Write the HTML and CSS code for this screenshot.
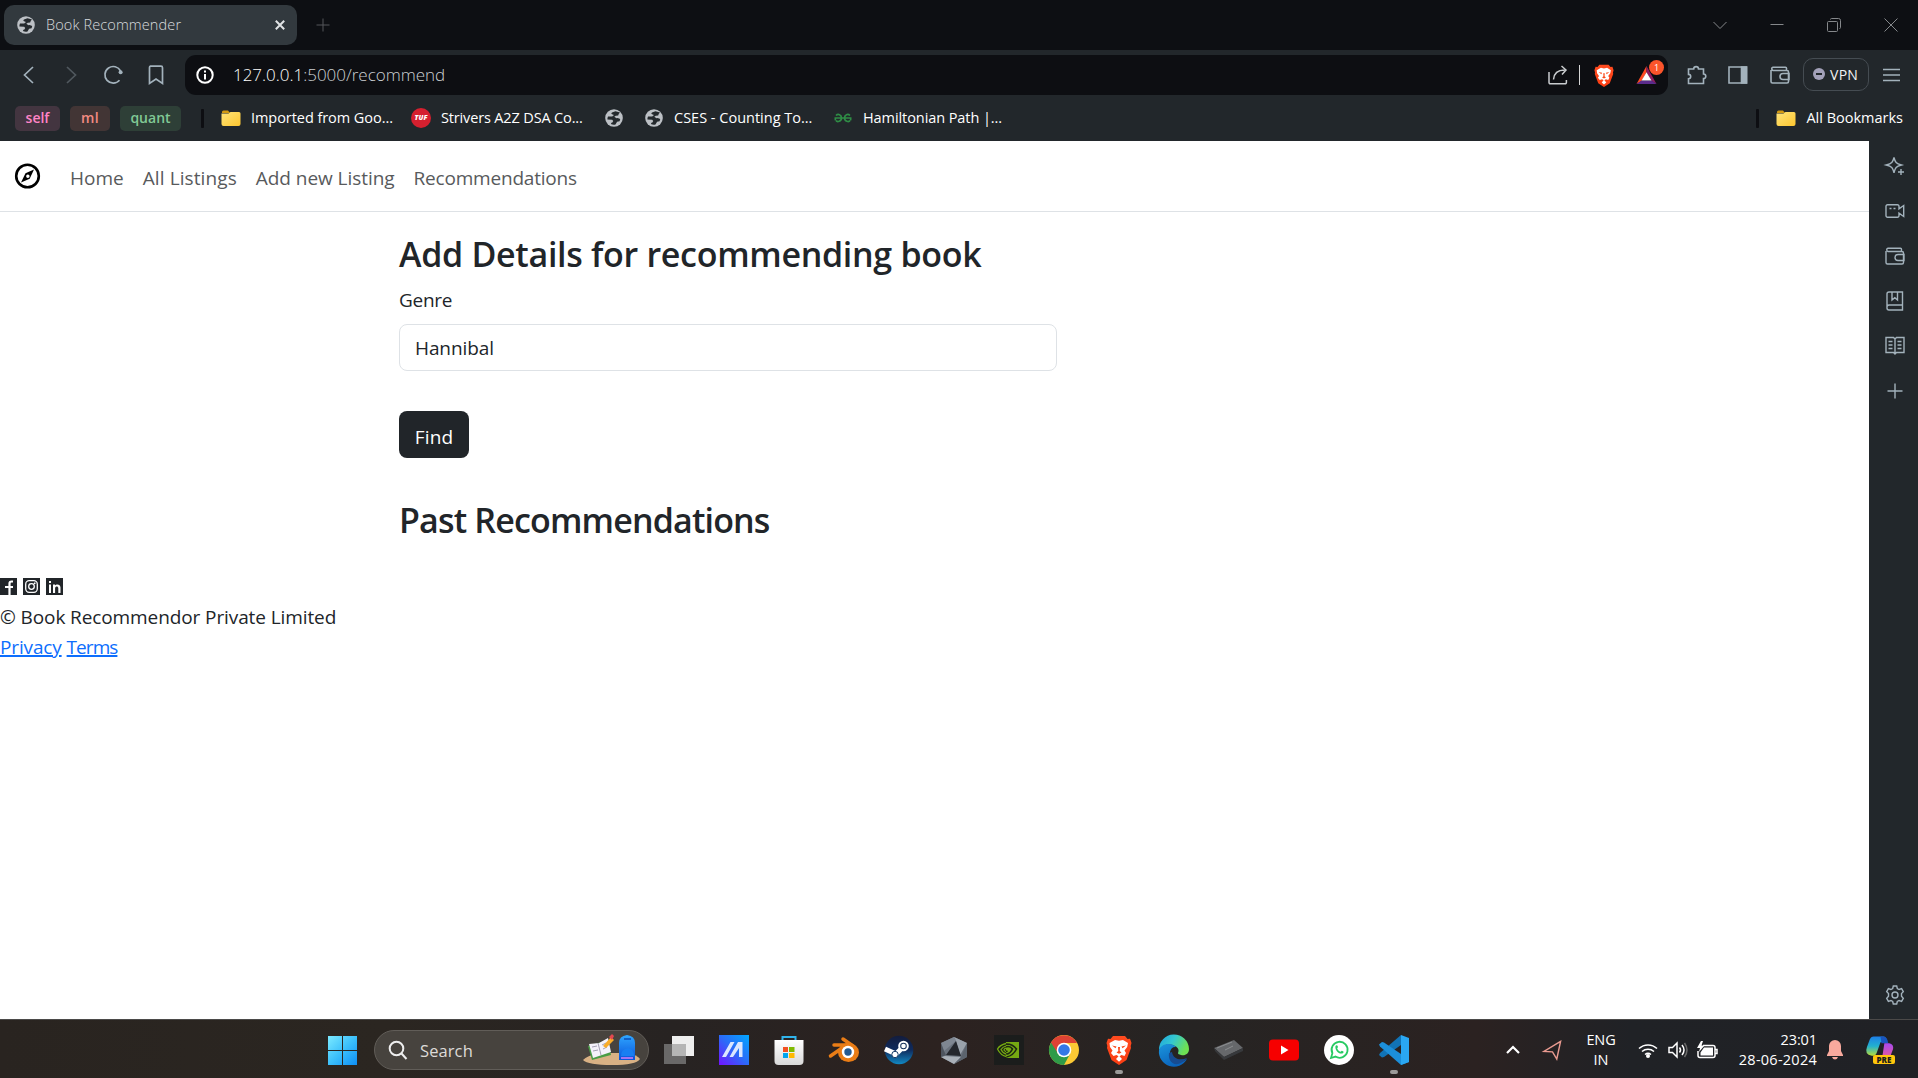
FILE: index.html
```html
<!DOCTYPE html>
<html lang="en">
<head>
<meta charset="utf-8">
<title>Book Recommender</title>
<link rel="stylesheet" href="styles.css">
</head>
<body>
<svg class="defs" aria-hidden="true">
  <defs>
    <symbol id="globe" viewBox="0 0 18 18"><circle cx="9" cy="9" r="8.8" fill="#bcc0c5"/><path d="M10.5 2.2 7 3.500q-1.500 1 0 1.800L9 6 7.200 7.600 3 7.400a7 7 0 0 0-.6 3.200l4.800.2 1 1.200-.8 1.500-1.400.4.300 1.300a7 7 0 0 0 4.200.2l1.600-2.600 2.500-.6.6-2.200-2.500-1-1.200.3-2.200-1.500 1.400-1 2.500-.3.6-1.800 1.200-1.200z" fill="#24292d"/></symbol>
    <symbol id="folder" viewBox="0 0 20 17"><path d="M1 2a1.500 1.500 0 0 1 1.500-1.500H7l2 2.500h-8z" fill="#d39a12"/><path d="M1 3.500h6.500L9.500 2H18a1.500 1.500 0 0 1 1.500 1.500V14A2 2 0 0 1 17.500 16h-15A2 2 0 0 1 .5 14V3.500z" fill="url(#gFolder)"/></symbol>
    <symbol id="lion" viewBox="0 0 26 30"><path d="M7 1h12l2.500 3 2.500-.3L25.500 8l-.8 3 .3 2-4.500 12L13 30 5.500 25 1 13l.3-2L.5 8 2 3.700l2.500.3z" fill="url(#gBrave)"/><path d="M9 5l4 .8L17 5l5 3-.8 4-2.700 3.500L20 18l-1.500 3-3-1-2 1.300 2.500 2.700-3 2.700-3-2.700 2.500-2.700-2-1.300-3 1L5 18l1.500-2.500L4 12 3.500 8z" fill="#fff"/><path d="M6 10.500l4.500 1-1 1.800zM20 10.500l-4.500 1 1 1.800zM12 12h2l-.3 4 1.800 1.500-2.500 1.300-2.500-1.300 1.800-1.500z" fill="#fb4a1a"/></symbol>
    <symbol id="wallet" viewBox="0 0 20 18"><path d="M1 4v11.500a1.500 1.500 0 0 0 1.500 1.500H17a1.500 1.500 0 0 0 1.500-1.500V6A1.500 1.500 0 0 0 17 4.500H3A1.700 1.700 0 0 1 3 1.200h12.500a1 1 0 0 1 1 1v2M19 7.500h-6a3 3 0 0 0 0 6h6z"/></symbol>
    <linearGradient id="gFolder" x2="1" y2="1"><stop stop-color="#ffe47a"/><stop offset="1" stop-color="#fdc62f"/></linearGradient>
    <linearGradient id="gBrave" x2="0" y2="1"><stop stop-color="#ff4b1f"/><stop offset="1" stop-color="#fb3d12"/></linearGradient>
    <linearGradient id="gWin" x2="1" y2="1"><stop stop-color="#7ceaff"/><stop offset=".5" stop-color="#3cc0fb"/><stop offset="1" stop-color="#0e8ff6"/></linearGradient>
    <linearGradient id="gAsus" x1="0" y1="1" x2="1" y2="0"><stop stop-color="#7312ff"/><stop offset=".5" stop-color="#2b6bf8"/><stop offset="1" stop-color="#00a8ff"/></linearGradient>
    <linearGradient id="gSteam" x2="0" y2="1"><stop stop-color="#131c3c"/><stop offset=".5" stop-color="#0f2b5d"/><stop offset="1" stop-color="#1189c4"/></linearGradient>
    <linearGradient id="gEdge" x1="0" y1="0" x2="1" y2=".4"><stop stop-color="#1ea4e0"/><stop offset=".5" stop-color="#34c7cf"/><stop offset="1" stop-color="#6ee053"/></linearGradient>
    <linearGradient id="gEdge2" x2=".5" y2="1"><stop stop-color="#1b95dd"/><stop offset="1" stop-color="#0a63bb"/></linearGradient>
    <linearGradient id="gBag" x2="0" y2="1"><stop stop-color="#2fa6ff"/><stop offset="1" stop-color="#0a55dc"/></linearGradient>
    <linearGradient id="gStore" x2="0" y2="1"><stop stop-color="#fff"/><stop offset="1" stop-color="#d9d9d9"/></linearGradient>
    <linearGradient id="gCop" x2="0" y2="1"><stop stop-color="#1d7fe8"/><stop offset=".5" stop-color="#22b0cf"/><stop offset="1" stop-color="#b9dd37"/></linearGradient>
    <linearGradient id="gCop2" x2="0" y2="1"><stop stop-color="#a64af0"/><stop offset="1" stop-color="#f0598f"/></linearGradient>
  </defs>
</svg>

<div class="desktop">
  <header class="tabstrip">
    <div class="tab">
      <svg class="globe-icon"><use href="#globe"/></svg>
      <span class="tab-title">Book Recommender</span>
      <svg class="tab-close" viewBox="0 0 10 10"><path d="M.8.8l8.400 8.400M9.200.8L.8 9.200"/></svg>
    </div>
    <svg class="new-tab" viewBox="0 0 14 14"><path d="M7 .5v13M.5 7h13"/></svg>
    <div class="window-controls">
      <svg viewBox="0 0 14 14"><path d="M.5 4l6.500 6.500L13.500 4"/></svg>
      <svg viewBox="0 0 14 14"><path d="M.5 6.500h13"/></svg>
      <svg viewBox="0 0 14 14"><path d="M.5 4.500a1 1 0 0 1 1-1h8a1 1 0 0 1 1 1v8a1 1 0 0 1-1 1h-8a1 1 0 0 1-1-1zM3.500 1.500a1 1 0 0 1 1-1h7a2 2 0 0 1 2 2v7a1 1 0 0 1-1 1"/></svg>
      <svg viewBox="0 0 14 14"><path d="M.5.5l13 13M13.500.5l-13 13"/></svg>
    </div>
  </header>

  <div class="toolbar">
    <nav class="history">
      <svg viewBox="0 0 20 20"><path d="M14 2L5.500 10l8.500 8"/></svg>
      <svg class="dim" viewBox="0 0 20 20"><path d="M6 2l8.500 8L6 18"/></svg>
      <svg viewBox="0 0 20 20"><path d="M16.500 15.300A8.300 8.300 0 1 1 17.600 6"/><circle cx="17.600" cy="7.300" r="2" fill="#a3b2bc" stroke="none"/></svg>
      <svg class="save" viewBox="0 0 20 20"><path d="M4.500 1.200h10.500a1.500 1.500 0 0 1 1.500 1.500V18.500L10 14l-6.500 4.500V2.500A1.300 1.300 0 0 1 4.500 1.200z"/></svg>
    </nav>
    <div class="address">
      <svg class="info" viewBox="0 0 18 18"><circle cx="9" cy="9" r="7.700" fill="none" stroke="#fff" stroke-width="2"/><path d="M8 4.500h2v2H8zM8 8h2v5.500H8z" fill="#fff"/></svg>
      <span class="url"><b>127.0.0.1</b>:5000/recommend</span>
      <div class="address-actions">
        <svg class="share" viewBox="0 0 20 20"><path d="M1 7v10.500a1.200 1.200 0 0 0 1.200 1.200h15a1.200 1.200 0 0 0 1.200-1.200V15M5.500 14.500c.5-6 4-9.500 11-9.500M13.500 1l4.500 4-4 4.500"/></svg>
        <span class="sep"></span>
        <svg class="shield"><use href="#lion"/></svg>
        <span class="rewards">
          <svg viewBox="0 0 24 22"><path d="M12 1L1 21l5.500-3.500L12 8z" fill="#ff4b22"/><path d="M12 1v7l5.500 9.500L23 21z" fill="#8f1d62"/><path d="M1 21l5.500-4h11L23 21z" fill="#5b2c8c"/><path d="M12 8l5.500 9h-11z" fill="#fff"/></svg>
          <i class="count">1</i>
        </span>
      </div>
    </div>
    <div class="extensions">
      <svg viewBox="0 0 20 20"><path d="M1.500 4h5.200a2.400 2.400 0 1 1 4.800 0h5V9a2.300 2.300 0 1 1 0 4.600V18.500h-15v-4.700a2.200 2.200 0 1 0 0-4.400z"/></svg>
      <svg viewBox="0 0 20 20"><path d="M1 2h17.500v16H1z"/><path d="M13.500 2h5v16h-5z" fill="#a3b2bc"/></svg>
      <svg><use href="#wallet"/></svg>
    </div>
    <div class="vpn"><i></i><span>VPN</span></div>
    <svg class="menu" viewBox="0 0 17 14"><path d="M0 1.500h17M0 7h17M0 12.500h17"/></svg>
  </div>

  <div class="bookmarks">
    <span class="chip pink">self</span>
    <span class="chip red">ml</span>
    <span class="chip green">quant</span>
    <i class="bar"></i>
    <span class="mark imported"><svg class="folder"><use href="#folder"/></svg><span>Imported from Goo...</span></span>
    <span class="mark strivers"><em class="tuf">TUF</em><span>Strivers A2Z DSA Co...</span></span>
    <span class="mark blank"><svg class="globe-icon"><use href="#globe"/></svg></span>
    <span class="mark cses"><svg class="globe-icon"><use href="#globe"/></svg><span>CSES - Counting To...</span></span>
    <span class="mark gfg"><svg class="gfg-icon" viewBox="0 0 18 10"><path d="M2 2.500C4 .5 7.500 1.500 7.500 5S3 9.500 2 7.300M1.500 7.300Q1 6 1.500 5M.5 5h17M16 2.500C14 .5 10.500 1.500 10.500 5s4.500 4.500 5.500 2.300M16.500 7.300Q17 6 16.500 5"/></svg><span>Hamiltonian Path |...</span></span>
    <span class="all"><i class="bar"></i><svg class="folder"><use href="#folder"/></svg><span>All Bookmarks</span></span>
  </div>

  <div class="viewport">
    <main class="page">
      <nav class="navbar">
        <svg class="brand" viewBox="0 0 26 26"><circle cx="13" cy="13" r="11.300" fill="none" stroke="#000" stroke-width="2.600"/><path fill-rule="evenodd" d="M19.500 6.500l-4.300 9.300-8.700 3.700L11 10.200zM13.300 11.500a1.700 1.700 0 1 0 .1 3.400 1.700 1.700 0 0 0 0-3.400z"/></svg>
        <a class="home">Home</a>
        <a class="listings">All Listings</a>
        <a class="add">Add new Listing</a>
        <a class="recs">Recommendations</a>
      </nav>
      <section class="content">
        <h3>Add Details for recommending book</h3>
        <label><span>Genre</span></label>
        <div class="field"><span>Hannibal</span></div>
        <button class="find">Find</button>
        <h3 class="past">Past Recommendations</h3>
      </section>
      <footer class="footer">
        <div class="social">
          <svg viewBox="0 0 17 17"><path fill="#212529" d="M0 0h17v17H0z"/><path d="M13 3.500h-1.500c-1.500 0-2 .8-2 2V17M5 9h8" fill="none" stroke="#fff" stroke-width="2.200"/></svg>
          <svg viewBox="0 0 17 17"><path fill="#212529" d="M0 0h17v17H0z"/><rect x="2.700" y="2.700" width="11.600" height="11.600" rx="3.500" fill="none" stroke="#fff" stroke-width="1.300"/><circle cx="8.500" cy="8.500" r="2.800" fill="none" stroke="#fff" stroke-width="1.300"/><path fill="#fff" d="M11 4.500h1.500V6H11z"/></svg>
          <svg viewBox="0 0 17 17"><path fill="#212529" d="M0 0h17v17H0z"/><path fill="#fff" d="M3 3h2v2H3zM3 6.500h2V15H3zM7 6.500h2v1c1-1.500 5.500-1.800 5.500 2V15h-2.200v-4.800c0-2.200-3.200-2-3.200 0V15H7z"/></svg>
        </div>
        <div class="copyright">© Book Recommendor Private Limited</div>
        <div class="links"><a>Privacy</a><a class="terms">Terms</a></div>
      </footer>
    </main>
    <aside class="sidebar">
      <svg viewBox="0 0 20 20"><path d="M9 1.500c1.200 5 2 6 7.500 7.500-5.500 1.500-6.300 2.500-7.500 7.800C7.700 11.500 7 10.500 1.200 9 7 7.500 7.700 6.500 9 1.500z"/><path d="M16 13v6M13 16h6"/></svg>
      <svg viewBox="0 0 20 20"><path d="M2.500 3.800h10a1.500 1.500 0 0 1 1.500 1.500v2.500l4.700-3.300v11L14 12.200v2.500a1.500 1.500 0 0 1-1.500 1.500h-10A1.500 1.500 0 0 1 1 14.700V5.300a1.500 1.500 0 0 1 1.500-1.500zM4.500 7.500h2M8.500 7.500h2"/></svg>
      <svg><use href="#wallet"/></svg>
      <svg viewBox="0 0 20 20"><path d="M17.500 14V1H4a2 2 0 0 0-2 2v14a2 2 0 0 0 2 2h13.500v-5H4a2 2 0 0 0-2 2.200M7 1v8l2.800-2.300L12.500 9V1"/></svg>
      <svg viewBox="0 0 20 20"><path d="M1 1.500h7.500L10 3l1.500-1.500H19v15h-7.500L10 18l-1.500-1.500H1zM10 3v15M3.500 5.500h4M3.500 9h4M3.500 12.500h4M12.500 5.500h4M12.500 9h4M12.500 12.500h4"/></svg>
      <svg viewBox="0 0 20 20"><path d="M10 2.500v15M2.500 10h15"/></svg>
      <svg class="gear" viewBox="0 0 20 20"><path d="M8.300 1h3.400l.6 2.500 1.800 1 2.500-.8 1.700 3L16.500 8.500v2.800l1.800 2-1.700 3-2.500-.8-1.800 1-.6 2.500H8.300l-.6-2.500-1.800-1-2.500.8-1.700-3 1.800-2V8.500L1.700 6.700l1.700-3 2.500.8 1.800-1z"/><circle cx="10" cy="10" r="3"/></svg>
    </aside>
  </div>

  <footer class="taskbar">
    <svg class="start" viewBox="0 0 29 29"><path fill="url(#gWin)" d="M0 0h14v14H0zM15 0h14v14H15zM0 15h14v14H0zM15 15h14v14H15z"/></svg>
    <div class="search">
      <svg class="lens" viewBox="0 0 20 20"><circle cx="8.500" cy="8.500" r="6.800"/><path d="M13.500 13.500L18.500 19"/></svg>
      <span>Search</span>
      <svg class="art" viewBox="0 0 58 32"><path d="M0 26q4-4 15-7h28q12 2 14 6-4 6-28 6T0 26z" fill="#d9b184"/><path d="M5 12l20-6 3 15-19 5z" fill="#4a9c46"/><path d="M6 10l10-1 9-5 3 14-9 3-9 3z" fill="#f4f1fa"/><path d="M15 9l3 12M9 13l5-1M10 17l5-1M19 11l4-2M20 15l4-2" stroke="#a4a0b4" fill="none"/><path d="M20 12L28 3l3 3-8 8z" fill="#f8ab29"/><path d="M26 3l3-3 2 2-2 4z" fill="#e34850"/><path d="M36 26V9q0-7 8-8 8 1 8 8v17z" fill="url(#gBag)"/><path d="M38 22q0-7 7-8 6 1 6 8z" fill="#197ff2"/><path d="M38 24h12" stroke="#a474f0" stroke-width="2"/><path d="M41 5h7" stroke="#074bb5" stroke-width="1.500"/></svg>
    </div>
    <div class="apps">
      <span><svg viewBox="0 0 30 30"><path fill="#eee" d="M8 1h22v20H8z"/><path fill="#777" fill-opacity=".82" d="M0 9h22v20H0z"/><path fill="#b5b5b5" d="M8 9h14v12H8z"/></svg></span>
      <span><svg viewBox="0 0 30 30"><path fill="url(#gAsus)" d="M0 0h30v30H0z"/><path d="M3 22L11.500 7h4L7 22zM10.500 22L19 7h4.500v15H20v-9l-6 9z" fill="#dbe7ff"/></svg></span>
      <span><svg viewBox="0 0 30 30"><path d="M8.500 7V2h13v5" fill="none" stroke="#30b4ec" stroke-width="2"/><path d="M.5 5h29v21a4 4 0 0 1-4 4h-21a4 4 0 0 1-4-4z" fill="url(#gStore)"/><path fill="#f25022" d="M9 12h5v5H9z"/><path fill="#7fba00" d="M15 12h5.500v5H15z"/><path fill="#00a4ef" d="M9 18h5v5H9z"/><path fill="#ffb900" d="M15 18h5.500v5H15z"/></svg></span>
      <span><svg viewBox="0 0 30 30"><path d="M14 4l10 7M5 10h16M1.500 21L16 11" stroke="#ea7d16" stroke-width="3.500" stroke-linecap="round" fill="none"/><ellipse cx="19.500" cy="17.500" rx="10.500" ry="9.500" fill="#ea7d16"/><circle cx="19" cy="17" r="6.200" fill="#fff"/><circle cx="19" cy="17" r="3.700" fill="#245a91"/></svg></span>
      <span><svg viewBox="0 0 30 30"><circle cx="15" cy="15" r="14.300" fill="url(#gSteam)"/><path d="M1 14l11 5 6-6" stroke="#fff" stroke-width="5" fill="none"/><circle cx="19.500" cy="11" r="4.300" fill="#17315a" stroke="#fff" stroke-width="2"/><circle cx="19.500" cy="11" r="2.300" fill="#fff"/><circle cx="11" cy="19.500" r="3.200" fill="#fff" stroke="#173b66"/></svg></span>
      <span><svg viewBox="0 0 30 30"><path d="M15 2l13 6v14l-13 7-13-7V8z" fill="#6a727d"/><path d="M15 2l13 6-7 12-4-14z" fill="#9aa2ab"/><path d="M2 22l4-1 16 1-7 7z" fill="#a9b0b8"/><path d="M15 2L2 8l3 8L17 6z" fill="#7f8792"/><path d="M2 8v14l5-2-2-4z" fill="#4d545e"/><path d="M17 6l5 15-15-1z" fill="#24272d"/><path d="M15 29l7-7 6-14v14z" fill="#5c646e"/></svg></span>
      <span><svg viewBox="0 0 30 30"><path fill="#1b1d1c" d="M0 0h30v30H0z"/><path fill="#76a912" d="M12 7h13v16H12z"/><path d="M12 8c-4 1-7 3-8.500 6 2 4 5 7 9 8 5-1 8-4 10-8-3-4-6-5-10-5-3 1-5 3-6 5 2 4 4 5 7 5 3-1 4-3 5-5-2-3-4-3-7-2-1 1-2 2-2 3 1 2 2 2 4 1" fill="none" stroke="#1d2812" stroke-width="1.600"/><path d="M12 8.500c-4 1-7 3-8.500 5.500 2 4 5 7 9 7.500M12 11c-3 1-4 2-5 3.500 1.500 3 3 4 5 4.500M12 13.200q-2 .8-2 1.800 1 1.500 2 1.500" fill="none" stroke="#76a912" stroke-width="1.300"/></svg></span>
      <span><svg viewBox="0 0 30 30"><circle cx="15" cy="15" r="15" fill="#fcc934"/><path d="M15 15L2 7.500A15 15 0 0 0 15 30l6-11z" fill="#2f9b48"/><path d="M2 7.500A15 15 0 0 1 28 8H15l-6 10.500z" fill="#de4234"/><circle cx="15" cy="15" r="7.300" fill="#fff"/><circle cx="15" cy="15" r="5.800" fill="#3478e6"/></svg></span>
      <span class="running"><svg viewBox="0 0 30 30"><use href="#lion" x="2" width="26" height="30"/></svg></span>
      <span><svg viewBox="0 0 30 30"><path d="M0 15A15 15 0 0 1 30 14c0 5-4 7-8 6-2-.500-3-1-3-2 1-2 1-5-3-7C10 8 3 10 0 15z" fill="url(#gEdge)"/><path d="M0 15C2 8 13 7 17 12c-6-1-8 8-4 12 4 4 10 4 15 0A15 15 0 0 1 0 15z" fill="url(#gEdge2)"/><path d="M10 18c-1 7 3 12 9 11 4-1 7-3 9-6-7 3-14 1-15-6z" fill="#174c92"/></svg></span>
      <span><svg viewBox="0 0 30 30"><path d="M0 13L20 5l9 8-19 9z" fill="#66686b"/><path d="M0 13l10 9v3L1 16zM10 22l19-9v3l-19 9z" fill="#37393c"/><path d="M3 13l15-6M11 15l8-4" stroke="#8c8e90"/></svg></span>
      <span><svg viewBox="0 0 30 30"><rect y="4.500" width="30" height="21" rx="4" fill="#f60000"/><path fill="#fff" d="M12 10.500l7.500 4.500-7.500 4.500z"/></svg></span>
      <span><svg viewBox="0 0 30 30"><circle cx="15" cy="15" r="15" fill="#fff"/><path d="M7 23l1.400-4.800A8 8 0 1 1 11.500 21.600z" fill="none" stroke="#28ca62" stroke-width="1.800"/><path d="M11.500 11c1-1.500 2-1 2.500 1l-.8 1.500c.7 1.600 1.600 2.500 3.300 3.300l1.300-1c2 .6 2.400 1.300 1 2.400-3.300 1.800-8.300-3-7.300-7.200z" fill="#28ca62"/></svg></span>
      <span class="running"><svg viewBox="0 0 30 30"><path d="M22 0v10L5 22l-2 .5L0 20l1-2z" fill="#1173b6"/><path d="M22 30l8-3-8-8L5 7.500 3 7 0 9.500l1 2z" fill="#1c8fda"/><path d="M22 0l8 3v24l-8 3z" fill="#2aa7f2"/></svg></span>
    </div>
    <div class="tray">
      <svg class="up" viewBox="0 0 14 8"><path d="M1 7l6-6 6 6"/></svg>
      <svg class="loc" viewBox="0 0 20 20"><path d="M18.500 1L1 11.500l9 .5 4.500 7.500z"/></svg>
      <div class="lang"><span>ENG</span><span>IN</span></div>
      <svg class="wifi" viewBox="0 0 20 16"><path d="M1 6.500a13 13 0 0 1 18 0M4 9.500a9 9 0 0 1 12 0M7 12.500a5 5 0 0 1 6 0"/><circle cx="10" cy="14" r="2" fill="#fff" stroke="none"/></svg>
      <svg class="vol" viewBox="0 0 20 18"><path d="M1 6.500h3.500L9 2v14l-4.500-4.500H1zM11.500 6.500q2 2.500 0 5M14 4q4 5 0 10"/><path d="M16.500 2q5 7 0 14" stroke="#686868"/></svg>
      <svg class="bat" viewBox="0 0 21 18"><path d="M6 4.500h10a2 2 0 0 1 2 2v8a2 2 0 0 1-2 2H3a2 2 0 0 1-2-2V10M18.500 8.500h1.500v4h-1.500"/><path d="M7 6.500h9v8H3.500v-3zM4 0L0 7h3L2 11l5.500-6.500h-3L6 0z" fill="#fff" stroke="none"/></svg>
      <div class="clock"><span>23:01</span><span class="date">28-06-2024</span></div>
      <svg class="bell" viewBox="0 0 16 20"><path fill="#f8a99d" d="M8 0a6 6 0 0 1 6 6v5l2 4v1H0v-1l2-4V6a6 6 0 0 1 6-6zM5 17h6q-1 2.500-3 2.500T5 17z"/></svg>
      <span class="copilot"><svg viewBox="0 0 30 28"><path d="M8 0h10q3 0 4 5l-7 1-4 11q-1 3-5 3-8-1-5-9L4 3q1-3 4-3z" fill="url(#gCop)"/><path d="M15 0h3q4 0 5 7h-7z" fill="#1955be"/><path d="M19 7h5q5 1 4 6l-3 8q-1 3-5 3h-8q4 0 5-4z" fill="url(#gCop2)"/></svg><b>PRE</b></span>
    </div>
  </footer>
</div>
</body>
</html>
```
FILE: styles.css
```css
* { box-sizing: border-box; }
body { margin: 0; overflow: hidden; font-family: "Open Sans", "Noto Sans", sans-serif; }
svg { display: block; flex: none; overflow: visible; }
.defs { position: absolute; width: 0; height: 0; }
span, a { white-space: nowrap; flex: none; }

.desktop { width: 1918px; height: 1078px; display: grid; grid-template-rows: 50px 50px 41px 878px 59px; background: #22272b; }

/* tab strip */
.tabstrip { display: flex; align-items: center; background: #0d0f13; padding-left: 4px; }
.tab { width: 293px; height: 40px; border-radius: 10px; background: #32393e; display: flex; align-items: center; padding: 0 12px 0 13px; }
.globe-icon { width: 18px; height: 18px; }
.tab-title { margin: -2px 0 0 11px; font-size: 14.500px; font-weight: 300; letter-spacing: .12px; color: #d9dcde; }
.tab-close { width: 10px; height: 10px; margin-left: auto; stroke: #e0e3e5; stroke-width: 2; fill: none; }
.new-tab { width: 14px; height: 14px; margin-left: 19px; stroke: #54575b; fill: none; }
.window-controls { margin-left: auto; display: flex; gap: 43px; padding-right: 20px; }
.window-controls svg { width: 14px; height: 14px; fill: none; stroke: #85888b; }

/* toolbar */
.toolbar { display: flex; align-items: center; }
.history { width: 185px; display: flex; gap: 22px; padding-left: 19px; }
.history svg { width: 20px; height: 20px; fill: none; stroke: #a3b2bc; stroke-width: 1.700; }
.history .save { margin-left: 1px; }
.history .dim { stroke: #50585e; }
.address { width: 1483px; height: 40px; border-radius: 11px; background: #0d0e12; display: flex; align-items: center; padding: 0 10px 0 11px; }
.info { width: 18px; height: 18px; }
.url { margin: -2px 0 0 19px; font-size: 17px; font-weight: 300; letter-spacing: -.02px; color: #ccd0d3; }
.url b { font-weight: 300; color: #fff; }
.address-actions { margin-left: auto; display: flex; align-items: center; }
.share { width: 20px; height: 20px; fill: none; stroke: #c9cccf; stroke-width: 1.500; }
.sep { width: 1px; height: 20px; background: #d5d5d5; margin: 0 14px 0 11px; }
.shield { width: 20px; height: 23px; }
.rewards { position: relative; margin-left: 21px; }
.rewards svg { width: 23px; height: 20px; }
.count { position: absolute; left: 14px; top: -5px; width: 15px; height: 15px; border-radius: 50%; background: #fb542b; color: #fff; font: 9px/15px "Open Sans", sans-serif; text-align: center; }
.extensions { display: flex; gap: 22px; margin-left: 19px; }
.extensions svg { width: 20px; height: 20px; fill: none; stroke: #a3b2bc; stroke-width: 1.600; }
.extensions svg + svg { margin-left: -1px; margin-right: 1px; }
.vpn { width: 66px; height: 33px; margin: -1px 0 0 12px; border: 1px solid #454c52; border-radius: 10px; display: flex; align-items: center; padding: 0 0 1px 9px; gap: 5px; font-size: 14px; letter-spacing: .3px; color: #f2f3f4; }
.vpn i { width: 12px; height: 12px; border-radius: 50%; background: #a3a1b9; display: grid; place-items: center; }
.vpn i::after { content: ""; width: 6px; height: 2px; background: #22272b; }
.menu { width: 17px; height: 14px; margin-left: 14px; stroke: #a3b2bc; stroke-width: 1.500; }

/* bookmarks */
.bookmarks { display: flex; align-items: center; padding: 0 15px 5px; font-size: 14.500px; color: #fff; }
.chip { height: 25px; border-radius: 5px; margin-right: 10px; font-weight: 600; font-size: 14px; line-height: 24px; text-align: center; }
.pink { width: 45px; background: #433540; color: #ff84c6; }
.red { width: 40px; background: #423535; color: #f28b82; letter-spacing: .3px; }
.green { width: 61px; background: #2e3f37; color: #81c995; }
.bar { width: 3px; height: 19px; background: #0d0e12; border-radius: 1px; }
.chip + .bar { margin-left: 10px; }
.mark { display: flex; align-items: center; gap: 10px; }
.mark > span, .all > span { margin-top: -2px; }
.folder { width: 20px; height: 17px; }
.imported { width: 190px; margin-left: 17px; letter-spacing: -.06px; }
.strivers { width: 194px; letter-spacing: -.15px; }
.blank { width: 40px; }
.cses { width: 189px; gap: 11px; }
.gfg { gap: 11px; letter-spacing: -.08px; }
.tuf { width: 20px; height: 20px; border-radius: 50%; background: #d5202f; color: #fff; font: italic 800 7px/20px "Open Sans", sans-serif; letter-spacing: 0; text-align: center; }
.gfg-icon { width: 18px; height: 10px; fill: none; stroke: #2f8d46; stroke-width: 1.700; }
.all { margin-left: auto; display: flex; align-items: center; }
.all .folder { margin: 0 10px 0 17px; }

/* web page */
.viewport { display: grid; grid-template-columns: 1869px 49px; }
.page { background: #fff; color: #212529; font-size: 19px; line-height: 30px; }
.navbar { height: 71px; border-bottom: 1px solid #dee2e6; display: flex; align-items: center; padding-left: 14px; color: #585a5c; }
.brand { width: 27px; height: 26px; }
.navbar a { margin: 3px 0 0 19px; }
.navbar .home { margin-left: 29px; }
.navbar .listings { letter-spacing: .1px; }
.navbar .add { letter-spacing: -.05px; }
.navbar .recs { letter-spacing: -.2px; }
.content { padding: 21px 0 0 399px; height: 360px; }
h3 { margin: 0; font-size: 34px; line-height: 42px; font-weight: 600; letter-spacing: -.3px; white-space: nowrap; }
label { display: block; margin-top: 10px; letter-spacing: -.3px; }
.field { width: 658px; height: 47px; margin-top: 9px; border: 1px solid #dee2e6; border-radius: 8px; padding: 8px 15px 0; letter-spacing: -.1px; }
.find { display: block; margin: 40px 0 0; width: 70px; height: 47px; border: 0; border-radius: 8px; background: #212529; color: #fff; font: inherit; padding: 4px 0 0; text-align: center; letter-spacing: .1px; }
.past { margin-top: 41px; letter-spacing: -.83px; }
.footer { padding-top: 6px; }
.social { display: flex; gap: 6px; height: 24px; }
.social svg { width: 17px; height: 17px; }
.copyright { letter-spacing: -.1px; }
.links { display: flex; gap: 5px; color: #0d6efd; letter-spacing: -.15px; text-decoration: underline; text-decoration-thickness: 2px; }
.terms { letter-spacing: -.95px; }
.sidebar { display: flex; flex-direction: column; align-items: center; gap: 25px; padding: 15px 0 14px 3px; }
.sidebar svg { width: 20px; height: 20px; fill: none; stroke: #a3b2bc; stroke-width: 1.400; }
.sidebar .gear { margin-top: auto; }

/* taskbar */
.taskbar { display: flex; align-items: center; border-top: 1px solid #4b4a49; background: linear-gradient(90deg, #292420 0, #2b2621 20%, #272322 35%, #2c2220 49%, #262423 62%, #2b2221 77%, #202226 85%, #202125 100%); padding: 2px 0 0 328px; }
.start { width: 29px; height: 29px; }
.search { width: 275px; height: 40px; margin-left: 17px; border: 1px solid #615d58; border-radius: 20px; background: #47433e; display: flex; align-items: center; padding: 0 7px 0 13px; color: #dedbd8; font-size: 16.500px; letter-spacing: .1px; }
.lens { width: 20px; height: 20px; margin-right: 12px; fill: none; stroke: #eee; stroke-width: 2; }
.art { width: 58px; height: 32px; margin-left: auto; }
.apps { display: flex; gap: 25px; margin-left: 15px; }
.apps span { position: relative; }
.apps svg { width: 30px; height: 30px; }
.running::after { content: ""; position: absolute; left: 11px; top: 35px; width: 8px; height: 4px; border-radius: 2px; background: #9b9a99; }
.tray { margin-left: 97px; display: flex; align-items: center; color: #fff; font-size: 14.500px; line-height: 20px; }
.tray svg { fill: none; stroke: #fff; stroke-width: 1.500; }
.tray .up { width: 14px; height: 8px; stroke-width: 2.200; }
.tray .loc { width: 19px; height: 20px; margin-left: 23px; stroke: #e99a90; }
.lang { width: 30px; margin-left: 24px; display: flex; flex-direction: column; align-items: center; letter-spacing: -.1px; }
.wifi { width: 20px; height: 16px; margin-left: 22px; }
.vol { width: 20px; height: 18px; margin-left: 10px; }
.bat { width: 21px; height: 18px; margin-left: 9px; }
.clock { width: 99px; margin-top: -1px; display: flex; flex-direction: column; align-items: flex-end; letter-spacing: -.1px; }
.date { letter-spacing: .25px; }
.tray .bell { width: 16px; height: 20px; margin-left: 10px; stroke: none; }
.copilot { position: relative; margin-left: 23px; }
.tray .copilot svg { width: 29px; height: 28px; stroke: none; }
.copilot b { position: absolute; left: 7px; bottom: 0; width: 22px; height: 9px; border-radius: 2px; background: #ffc60b; color: #1c1c1c; font: 800 8px/9px "Open Sans", sans-serif; text-align: center; }
```
